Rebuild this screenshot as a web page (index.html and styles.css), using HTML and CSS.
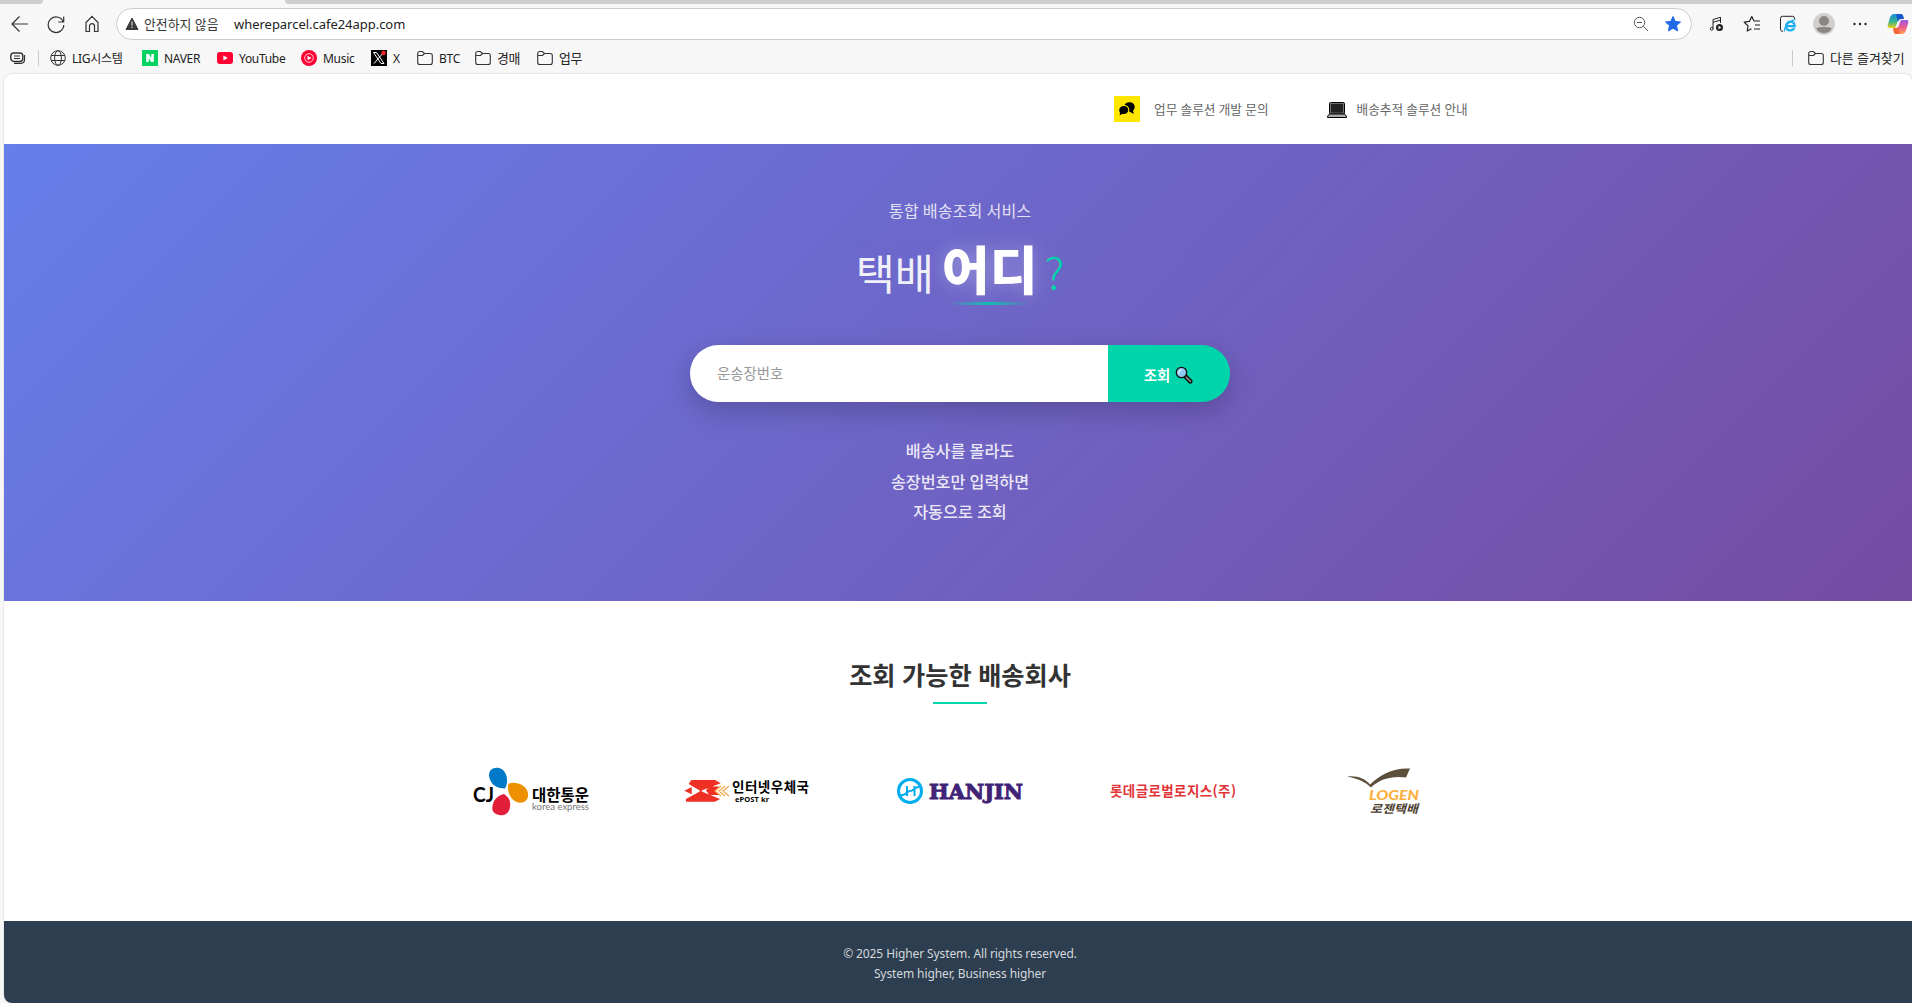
FILE: index.html
```html
<!DOCTYPE html>
<html lang="ko">
<head>
    <meta charset="UTF-8">
    <meta name="viewport" content="width=device-width, initial-scale=1.0">
    <title>택배 어디?</title>
    <link rel="stylesheet" href="styles.css">
</head>
<body>
    <svg class="defs" width="0" height="0">
        <symbol id="folder" viewBox="0 0 16 16">
            <path d="M.7 12.5v-9A2 2 0 0 1 2.700 1.500h2.600l2.200 2h5.800a2 2 0 0 1 2 2v7a2 2 0 0 1-2 2H2.700a2 2 0 0 1-2-2zM.7 5.500h4.800l2-2" fill="none" stroke="#333" stroke-width="1.100"/>
        </symbol>
    </svg>

    <div class="tabs"><span class="tab-left"></span><span class="tab-active"></span><span class="tab-right"></span></div>

    <div class="toolbar">
        <svg class="nav-icon" viewBox="0 0 20 20"><path d="M18 10H2.500M9.500 2.500 2 10l7.500 7.500"/></svg>
        <svg class="nav-icon" viewBox="0 0 20 20"><path d="M17.500 8.500A7.800 7.800 0 1 0 17.800 11M17.700 2.500v5.500h-5.500"/></svg>
        <svg class="nav-icon" viewBox="0 0 20 20"><path d="M4 17.500V8.500L10 2.300l6 6.200v9h-3.500v-5.300a2.500 2.500 0 0 0-5 0v5.300z"/></svg>

        <div class="address">
            <svg class="warn" width="14" height="14" viewBox="0 0 14 14"><path d="M7 1 13 12.500H1z" fill="#3b3b3b" stroke="#3b3b3b" stroke-linejoin="round"/><path d="M7 4.500v4M7 9.500v1.500" stroke="#ccc" stroke-width="1.300"/></svg>
            <span class="safe">안전하지 않음</span>
            <span class="url">whereparcel.cafe24app.com</span>
            <svg class="lens" width="16" height="16" viewBox="0 0 16 16"><circle cx="6.500" cy="6.500" r="5.200"/><path d="M10.300 10.300 15 15M4 6.500h5"/></svg>
            <svg class="star" width="18" height="18" viewBox="0 0 18 18"><path d="m9 1.500 2.200 4.900 5.300.6-4 3.600 1.100 5.300L9 13.200l-4.600 2.700 1.100-5.300-4-3.600 5.300-.6z" fill="#2068e8" stroke="#2068e8" stroke-linejoin="round"/></svg>
        </div>

        <div class="tools">
            <svg width="20" height="20" viewBox="0 0 20 20"><path d="M6 14.500V5.500l7.500-2.200V9M6 8.300l7.500-2.200" fill="none" stroke="#222"/><circle cx="4.700" cy="14.800" r="1.400" fill="none" stroke="#222"/><circle cx="12.500" cy="13.500" r="3.500" fill="#222"/><path d="m11.500 11.700 2.800 1.800-2.800 1.800z" fill="#fff"/></svg>
            <svg width="20" height="20" viewBox="0 0 20 20"><path d="M12 7 9.800 2.500 7.500 7.300l-5.300.9 3.900 3.700L5.200 17l4.300-2.300M12 7h6M13 11h5M12 15h6" fill="none" stroke="#222" stroke-width="1.200" stroke-linejoin="round"/></svg>
            <svg width="20" height="20" viewBox="0 0 20 20"><path d="M5 17.300H4.500a2 2 0 0 1-2-2v-11a2 2 0 0 1 2-2h10a2 2 0 0 1 2 2V5" fill="none" stroke="#222"/><path d="M8 12.200h8.700c0-6.500-8.700-5.700-8.700.3 0 4.800 6.500 5 8.300 1.500" fill="none" stroke="#1eb0ee" stroke-width="2.300"/><path d="M6.500 17.500c-1-4 5-11 11-12" fill="none" stroke="#1eb0ee" stroke-width="1.200"/></svg>
            <svg width="22" height="22" viewBox="0 0 22 22"><circle cx="11" cy="11" r="11" fill="#d2d0ce"/><circle cx="11" cy="8" r="5" fill="#8a8886"/><path d="M3.500 15.500c0-2 15-2 15 0C18 18 15 20 11 20s-7-2-7.500-4.500z" fill="#8a8886"/></svg>
            <svg width="20" height="20" viewBox="0 0 20 20"><g fill="#222"><circle cx="4.500" cy="10" r="1.200"/><circle cx="10" cy="10" r="1.200"/><circle cx="15.500" cy="10" r="1.200"/></g></svg>
            <svg class="copilot" width="22" height="22" viewBox="0 0 22 22">
                <defs>
                    <linearGradient id="cp1" x2="0" y2="1"><stop offset="0" stop-color="#1a8fe0"/><stop offset=".55" stop-color="#35b58a"/><stop offset="1" stop-color="#f5cf1c"/></linearGradient>
                    <linearGradient id="cp2" x2="0" y2="1"><stop offset="0" stop-color="#9a5be8"/><stop offset=".5" stop-color="#ec5b93"/><stop offset="1" stop-color="#ffa04c"/></linearGradient>
                </defs>
                <path d="M12 1H7C4 1 3 4 2 8S-1 15 3 15h4c2 0 2-2 3-5s2-5 5-5c-.5-2.500-1-4-3-4z" fill="url(#cp1)"/>
                <path d="M9 1h5c2 0 2.500 2 3 5h-2c-2 0-3 0-4 3z" fill="#1659cf"/>
                <path d="M10 21h5c3 0 4-3 5-7s3-7-1-7h-4c-2 0-2 2-3 5s-2 5-5 5c.5 2.500 1 4 3 4z" fill="url(#cp2)"/>
                <path d="M13 21H9c-2 0-2.500-2-3-6h2c2 0 2 0 3-1z" fill="#f2663b"/>
            </svg>
        </div>
    </div>

    <div class="bookmarks">
        <svg class="stack" width="16" height="16" viewBox="0 0 16 16"><rect x=".8" y="3" width="12" height="8.500" rx="3" fill="none" stroke="#333" stroke-width="1.400"/><path d="M4 6h6M4 8.500h6M14.500 5v4.500c0 2.500-1.500 3.800-3.500 3.800H4" fill="none" stroke="#333" stroke-width="1.200"/></svg>
        <span class="divider"></span>
        <a class="bm bm-lig"><svg viewBox="0 0 16 16"><g fill="none" stroke="#333"><circle cx="8" cy="8" r="7.300"/><ellipse cx="8" cy="8" rx="3.400" ry="7.300"/><path d="M1.300 5.500h13.400M1.300 10.500h13.400"/></g></svg>LIG시스템</a>
        <a class="bm bm-naver"><svg viewBox="0 0 16 16"><path d="M0 0h16v16H0z" fill="#04d361"/><path d="M4.200 12V4h2.600l2.500 4V4h2.500v8H9.200L6.700 8v4z" fill="#fff"/></svg>NAVER</a>
        <a class="bm bm-yt"><svg viewBox="0 0 16 16"><rect y="2" width="16" height="12" rx="3" fill="#ff0033"/><path d="m6.400 5.500 4.300 2.500-4.300 2.500z" fill="#fff"/></svg>YouTube</a>
        <a class="bm bm-music"><svg viewBox="0 0 16 16"><circle cx="8" cy="8" r="8" fill="#ff0033"/><circle cx="8" cy="8" r="4.300" fill="none" stroke="#fff" stroke-width=".8"/><path d="m6.500 5.700 4 2.300-4 2.300z" fill="#fff"/></svg>Music</a>
        <a class="bm bm-x"><svg viewBox="0 0 16 16"><path d="M0 0h16v16H0z" fill="#000"/><path d="M2.500 2.500h3l7.500 11h-3zM12.500 2.500l-9.500 11" fill="none" stroke="#fff"/><circle cx="12.500" cy="3" r="2.200" fill="#f22"/></svg>X</a>
        <a class="bm bm-btc"><svg><use href="#folder"/></svg>BTC</a>
        <a class="bm bm-auction"><svg><use href="#folder"/></svg><span>경매</span></a>
        <a class="bm bm-work"><svg><use href="#folder"/></svg><span>업무</span></a>
        <span class="divider divider-right"></span>
        <a class="bm bm-other"><svg><use href="#folder"/></svg><span>다른 즐겨찾기</span></a>
    </div>

    <div class="page">
        <header class="header">
            <a class="menu-item menu-talk">
                <span class="talk-icon"><svg width="16" height="14" viewBox="0 0 16 14"><path d="M5.500 3C6.500 1 8.500.3 10.500.3c3 0 5.200 2 5.200 4.700 0 1.800-.8 3-1.700 3.800.1 1 .5 1.800 1.200 2.700-1.500 0-3-.6-4-1.500h-1C11 6.500 9.500 3.500 5.500 3z"/><path d="M4.800 4C7.600 4 9.300 5.700 9.300 8s-2 4.100-4.500 4.100c-.7 0-1.200-.1-1.700-.2-.8.700-1.700 1.100-2.800 1.300.6-.8.800-1.500.8-2.300C.6 10.200.2 9.200.2 8c0-2.300 1.900-4 4.600-4z"/></svg></span>
                <span class="menu-text">업무 솔루션 개발 문의</span>
            </a>
            <a class="menu-item menu-track">
                <svg width="20" height="16" viewBox="0 0 20 16"><rect x="2.500" y=".5" width="15" height="11.500" rx="1.200" fill="#222" stroke="#000"/><rect x="3.400" y="1.300" width="13.200" height="9.800" fill="none" stroke="#999" stroke-width=".7"/><path d="m2.500 12-2 2.300v1.200h19v-1.200l-2-2.300z" fill="#aaa" stroke="#000"/></svg>
                <span class="menu-text">배송추적 솔루션 안내</span>
            </a>
        </header>

        <section class="hero">
            <p class="subtitle">통합 배송조회 서비스</p>
            <h1><span class="parcel">택배</span><span class="where">어디</span><span class="question">?</span></h1>

            <form class="search">
                <input type="text" placeholder="운송장번호">
                <button type="button">조회
                    <svg width="18" height="18" viewBox="0 0 18 18"><path d="m10 10 5.300 5.300" stroke="#000" stroke-width="4.500" stroke-linecap="round"/><path d="m11.500 11.500 3.800 3.800" stroke="#777" stroke-width="2.300" stroke-linecap="round"/><circle cx="6.500" cy="6.500" r="5.200" fill="#8ec9f5" stroke="#111" stroke-width="1.300"/><path d="M3.800 7.500c-.3-2 1-3.600 3-3.700" fill="none" stroke="#d7eefe" stroke-width="1.500"/></svg>
                </button>
            </form>

            <p class="guide">배송사를 몰라도<br>송장번호만 입력하면<br>자동으로 조회</p>
        </section>

        <section class="companies">
            <h2>조회 가능한 배송회사</h2>
            <div class="logos">
                <svg viewBox="0 0 128 60">
                    <path d="M23 7.500c6-2 11 1 13 6 2 5 1 11-1 14-7 0-13-3-15-9-2-5-1-9 3-11z" fill="#0079c8"/>
                    <path d="M39 22.500c6-2 13 0 17 5 4 6 2 13-4 14-7 1-11-4-13-9-1-4-2-8 0-10z" fill="#ee9100"/>
                    <path d="M34 33c5 3 7 8 6 13-1 7-6 9-11 8-6-1-8-5-6-11 1-5 6-9 11-10z" fill="#e11f3a"/>
                    <text class="cj" x="3" y="41" textLength="21" lengthAdjust="spacingAndGlyphs">CJ</text>
                    <text class="cj-ko" x="62" y="39.500" textLength="57" lengthAdjust="spacingAndGlyphs">대한통운</text>
                    <text class="cj-en" x="62" y="49" textLength="57" lengthAdjust="spacingAndGlyphs">korea express</text>
                </svg>
                <svg viewBox="0 0 128 60">
                    <path d="M5.700 23 8.300 19H32l5.700 3.300-19 7.300v.8L37 38l-5 2.700H3V38l13.700-7.500v-1zM1.300 29.700 8.700 26v7.300zM23 29.500l3.500-4h10L32 30l4.500 4h-10z" fill="#ee3124"/>
                    <path d="m38 25-6 5 6 5M42 25l-6 5 6 5M46 25l-6 5 6 5" fill="none" stroke="#f3a94b" stroke-width="1.200"/>
                    <text class="post-ko" x="49" y="31" textLength="77">인터넷우체국</text>
                    <text class="post-en" x="52" y="41" textLength="34">ePOST kr</text>
                </svg>
                <svg viewBox="0 0 128 60">
                    <circle cx="14" cy="30" r="11.500" fill="none" stroke="#00aeef" stroke-width="3"/>
                    <path d="M11 25v10M18.500 25v10M4 34c6 1 7-4 10-4 4 0 4-4 9-4" fill="none" stroke="#00aeef" stroke-width="2"/>
                    <text class="hanjin" x="33" y="37.500" textLength="94" lengthAdjust="spacingAndGlyphs">HANJIN</text>
                </svg>
                <svg viewBox="0 0 128 60">
                    <text class="lotte" x="1" y="35" textLength="126">롯데글로벌로지스(주)</text>
                </svg>
                <svg viewBox="0 0 128 60">
                    <path d="M25 15.500c11-1 18 2 23 8 9-9 23-17 40-16l-4 9c-13-2-26 1-35 10-6-6-14-9-24-11z" fill="#5c503c"/>
                    <text class="logen" x="47" y="38.500" textLength="50" lengthAdjust="spacingAndGlyphs">LOGEN</text>
                    <text class="logen-ko" x="48" y="52" textLength="48" lengthAdjust="spacingAndGlyphs">로젠택배</text>
                </svg>
            </div>
        </section>

        <footer>
            <p>© 2025 Higher System. All rights reserved.</p>
            <p>System higher, Business higher</p>
        </footer>
    </div>
</body>
</html>
```

FILE: styles.css
```css
* {
    box-sizing: border-box;
    margin: 0;
    padding: 0;
}
body {
    height: 1003px;
    overflow: hidden;
    background: #f7f7f7;
    font-family: 'Noto Sans', 'Noto Sans CJK KR', sans-serif;
    color: #333;
}
svg {
    display: block;
    flex: none;
}
.defs {
    position: absolute;
}

/* browser chrome */
.tabs {
    display: flex;
    height: 4px;
    background: #f7f7f7;
}
.tab-left, .tab-right {
    background: #cdcdcd;
}
.tab-left {
    width: 43px;
    border-radius: 0 0 5px 0;
}
.tab-active {
    width: 242px;
}
.tab-right {
    flex: 1;
    border-radius: 0 0 0 5px;
}
.toolbar {
    display: flex;
    align-items: center;
    height: 40px;
    padding-left: 10px;
}
.nav-icon {
    width: 20px;
    height: 20px;
    margin-right: 16px;
    fill: none;
    stroke: #333;
    stroke-width: 1.2;
    stroke-linejoin: round;
}
.address {
    display: flex;
    align-items: center;
    width: 1576px;
    height: 32px;
    margin-left: -2px;
    padding: 0 9px;
    border: 1px solid #ccc;
    border-radius: 16px;
    background: #fff;
}
.address .warn {
    margin-left: -1px;
}
.safe {
    width: 90px;
    margin-left: 5px;
    padding-bottom: 1px;
    font-size: 12.9px;
    line-height: 20px;
    white-space: nowrap;
}
.url {
    font-size: 13px;
    letter-spacing: -0.03px;
    color: #222;
}
.lens {
    margin-left: auto;
    margin-right: 15px;
    fill: none;
    stroke: #555;
}
.tools {
    display: flex;
    align-items: center;
    gap: 15.3px;
    margin-left: 15px;
}
.tools .copilot {
    margin-left: 1.5px;
}
.bookmarks {
    display: flex;
    align-items: center;
    height: 28px;
    padding-left: 10px;
}
.divider {
    width: 1px;
    height: 16px;
    margin: 0 11px 0 12px;
    background: #ccc;
}
.divider-right {
    margin-left: auto;
    margin-right: 15px;
}
.bm {
    display: flex;
    align-items: center;
    gap: 6px;
    font-size: 12px;
    letter-spacing: -0.3px;
    white-space: nowrap;
    color: #222;
}
.bm svg {
    width: 16px;
    height: 16px;
}
.bm span {
    padding-bottom: 2px;
}
.bm-lig { width: 92px; }
.bm-naver { width: 75px; }
.bm-yt { width: 84px; }
.bm-music { width: 70px; }
.bm-x { width: 46px; }
.bm-btc { width: 58px; }
.bm-auction { width: 62px; }
.bm-auction, .bm-work { font-size: 12.9px; }
.bm-other {
    width: 104px;
    font-size: 12.9px;
    letter-spacing: 0;
}

/* page */
.page {
    height: 929px;
    margin: 2px 0 0 4px;
    border-radius: 8px 8px 0 8px;
    overflow: hidden;
    background: #fff;
    box-shadow: 0 0 2px rgba(0, 0, 0, 0.2);
}
.header {
    display: flex;
    align-items: center;
    height: 70px;
    padding-left: 1110px;
}
.menu-item {
    display: flex;
    align-items: center;
    font-size: 12.65px;
    color: #666;
}
.menu-text {
    padding-bottom: 2px;
}
.menu-talk {
    width: 213px;
    gap: 14px;
}
.menu-track {
    gap: 9.5px;
}
.menu-track svg {
    margin-top: 2px;
}
.talk-icon {
    display: flex;
    align-items: center;
    justify-content: center;
    width: 26px;
    height: 26px;
    background: #ffe600;
}
.hero {
    display: flex;
    flex-direction: column;
    align-items: center;
    height: 457px;
    padding: 53px 0 0 4px;
    background: linear-gradient(135deg, #667eea 0%, #764ba2 100%);
    color: #fff;
}
.subtitle {
    font-size: 16.2px;
    line-height: 28px;
    opacity: 0.8;
}
h1 {
    display: flex;
    align-items: baseline;
    height: 86px;
    line-height: 86px;
    font-family: 'Noto Sans CJK KR', sans-serif;
    font-weight: 400;
}
.parcel {
    font-size: 42.5px;
    font-weight: 400;
    opacity: 0.9;
}
.where {
    position: relative;
    margin-left: 8px;
    font-size: 52px;
    font-weight: 900;
    text-shadow: 0 0 18px rgba(255, 255, 255, 0.3);
}
.where::after {
    content: '';
    position: absolute;
    bottom: 6px;
    left: 6px;
    width: 82px;
    height: 3px;
    background: linear-gradient(90deg, transparent, #00d4aa, transparent);
    opacity: 0.8;
}
.question {
    margin-left: 7px;
    font-size: 44px;
    font-weight: 200;
    color: #00d4aa;
}
.search {
    display: flex;
    width: 540px;
    height: 57px;
    margin-top: 34px;
    border-radius: 29px;
    overflow: hidden;
    box-shadow: 0 9px 27px rgba(0, 0, 0, 0.2);
}
.search input {
    flex: 1;
    padding: 0 27px 2px;
    border: none;
    font: 14.4px 'Noto Sans CJK KR', sans-serif;
}
.search input::placeholder {
    color: #999;
}
.search button {
    display: flex;
    align-items: center;
    justify-content: center;
    gap: 5px;
    width: 122px;
    padding: 2px 1px 0 0;
    border: none;
    background: #00d4aa;
    color: #fff;
    font: bold 14.4px 'Noto Sans CJK KR', sans-serif;
}
.guide {
    margin-top: 34px;
    font-size: 16.2px;
    font-weight: 500;
    line-height: 30.6px;
    text-align: center;
    opacity: 0.85;
}
.companies {
    display: flex;
    flex-direction: column;
    align-items: center;
    height: 320px;
    padding: 54px 0 0 4px;
}
h2 {
    font-size: 25.2px;
    line-height: 40px;
}
h2::after {
    content: '';
    display: block;
    width: 54px;
    height: 2px;
    margin: 7px auto 0;
    background: #00d4aa;
}
.logos {
    display: grid;
    grid-template-columns: repeat(5, 128px);
    gap: 85px;
    margin-top: 57px;
}
.logos svg {
    width: 128px;
    height: 60px;
}
.logos text {
    font-family: 'Noto Sans CJK KR', sans-serif;
    font-weight: 700;
}
.logos .cj {
    font-family: Lato, sans-serif;
    font-size: 20px;
}
.logos .cj-ko {
    font-size: 15.5px;
}
.logos .cj-en {
    font-family: Lato, sans-serif;
    font-size: 9.5px;
    font-weight: 400;
    fill: #777;
}
.logos .post-ko {
    font-size: 13.5px;
}
.logos .post-en {
    font-family: 'Noto Sans', sans-serif;
    font-size: 7.5px;
}
.logos .hanjin {
    font-family: 'DejaVu Serif', serif;
    font-size: 20px;
    fill: #3f2376;
    stroke: #3f2376;
    stroke-width: 0.9;
}
.logos .lotte {
    font-size: 13.5px;
    fill: #e13438;
}
.logos .logen {
    font-family: Lato, sans-serif;
    font-size: 14px;
    font-style: italic;
    font-weight: 900;
    fill: #fbb040;
}
.logos .logen-ko {
    font-size: 11.5px;
    font-style: italic;
    fill: #4d4030;
}
footer {
    height: 82px;
    padding: 23px 0 0 4px;
    background: #2c3e50;
    color: #d5d8dc;
    font-size: 12px;
    line-height: 20px;
    letter-spacing: -0.1px;
    text-align: center;
}
```
